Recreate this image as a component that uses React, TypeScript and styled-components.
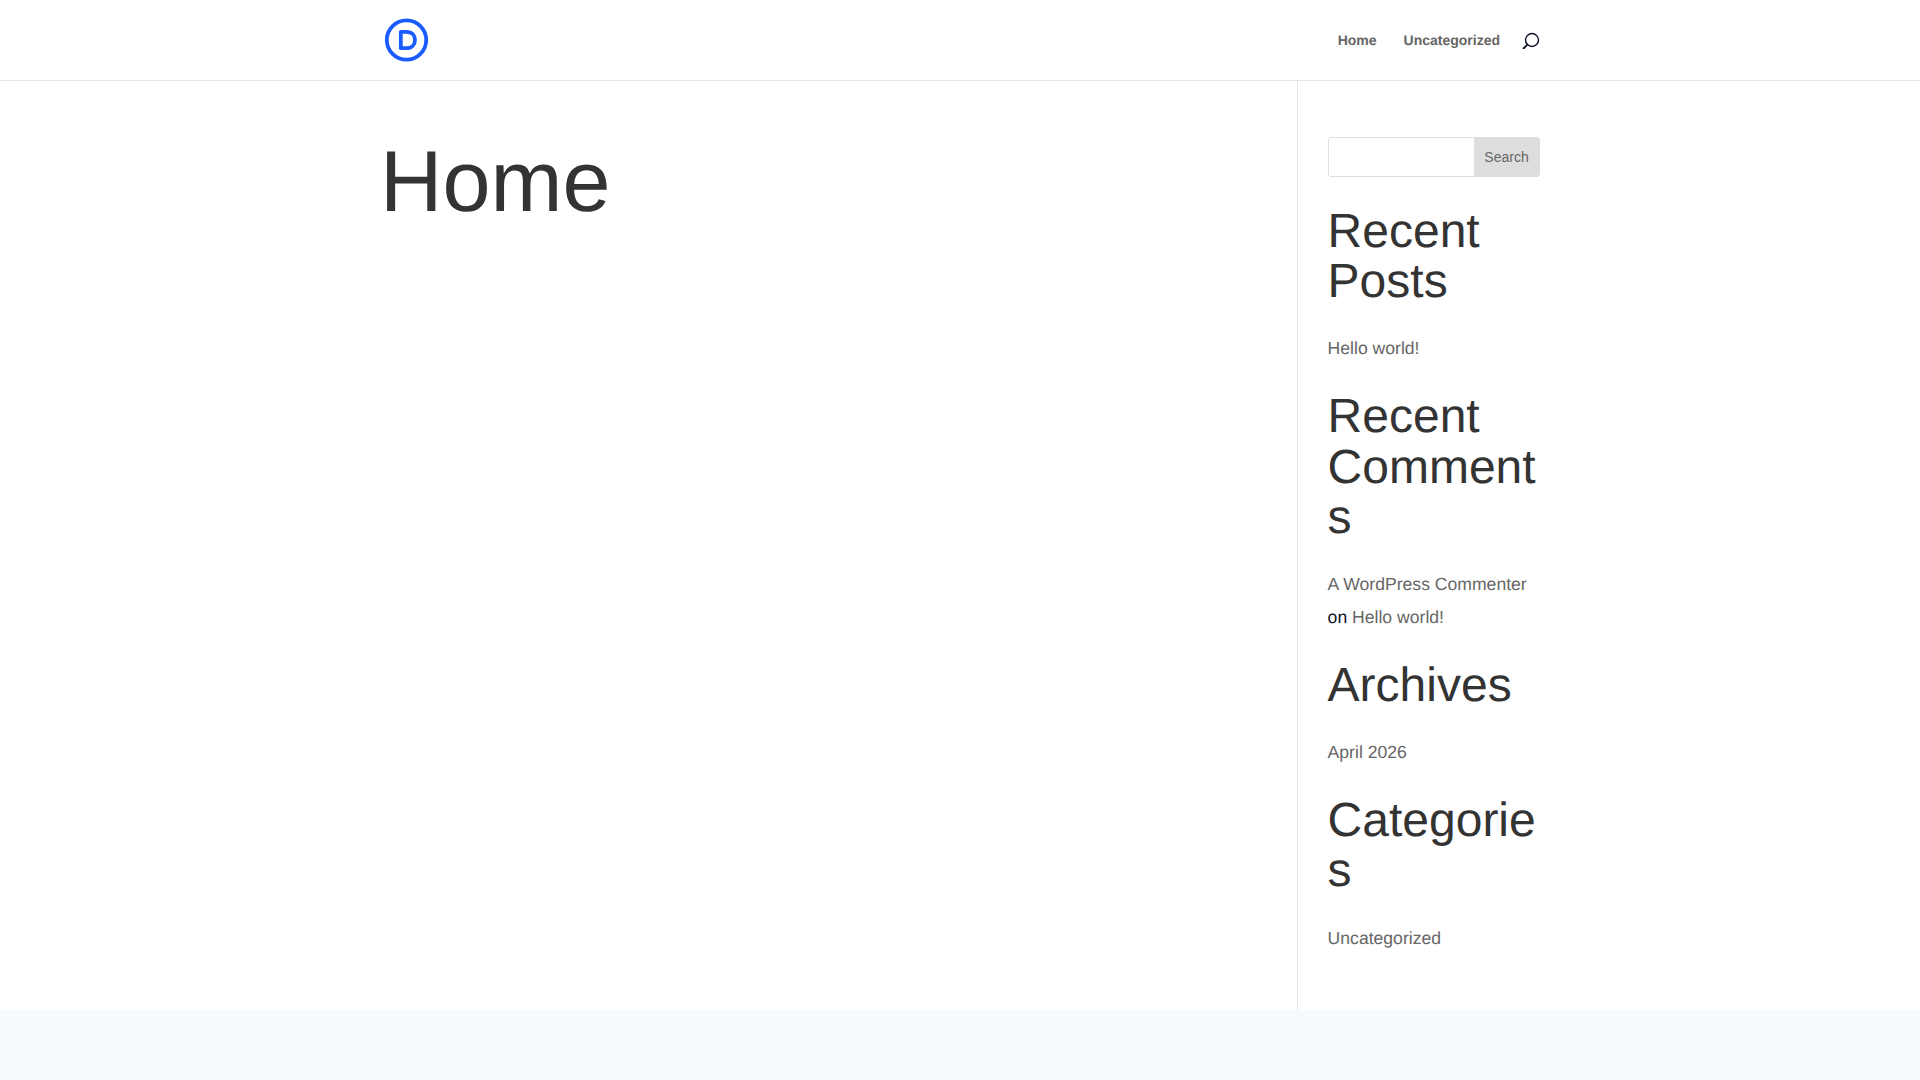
import React from "react";
import styled, { createGlobalStyle } from "styled-components";

const GlobalStyle = createGlobalStyle`
  html, body {
    margin: 0;
    padding: 0;
    background: #f7fafd;
    font-family: "Liberation Sans", Arial, sans-serif;
    text-rendering: geometricPrecision;
  }
  * {
    box-sizing: border-box;
  }
`;

const Page = styled.div`
  min-height: 1080px;
  display: flex;
  flex-direction: column;
  background: #f7fafd;
`;

const Header = styled.header`
  height: 81px;
  background: #fff;
  border-bottom: 1px solid #e6e6e6;
  padding: 0 380px 0 384px;
  display: flex;
  align-items: center;
  justify-content: space-between;
`;

const Logo = styled.svg`
  width: 46px;
  height: 46px;
  display: block;
`;

const Nav = styled.nav`
  display: flex;
  align-items: center;
  gap: 27px;
`;

const NavLink = styled.a`
  font-size: 14px;
  font-weight: 700;
  color: #666;
`;

const SearchIcon = styled.svg`
  width: 18px;
  height: 18px;
  margin-left: -5px;
  display: block;
`;

const Main = styled.main`
  height: 929px;
  background: #fff;
  padding-left: 380px;
  padding-right: 380px;
  display: flex;
`;

const Content = styled.div`
  flex: none;
  width: 918px;
  border-right: 1px solid #e6e6e6;
  padding-top: 56px;
`;

const PageTitle = styled.h1`
  margin: 0;
  font-size: 86.400px;
  font-weight: 400;
  line-height: 90px;
  color: #333;
`;

const Sidebar = styled.aside`
  flex: 1;
  min-width: 0;
  padding: 56px 0 0 29.600px;
`;

const SearchForm = styled.form`
  display: flex;
  height: 40px;
  margin-bottom: 29.500px;
  border: 1px solid #ddd;
  border-radius: 3px;
  overflow: hidden;
`;

const SearchInput = styled.input`
  flex: 1;
  width: 100%;
  min-width: 0;
  border: 0;
  background: #fff;
`;

const SearchButton = styled.button`
  flex: none;
  width: 65px;
  border: 0;
  padding: 0;
  background: #ddd;
  color: #666;
  font: 14px "Liberation Sans", Arial, sans-serif;
`;

const Widget = styled.section`
  margin-bottom: 27.700px;
`;

const WidgetTitle = styled.h2`
  margin: 0 0 24.700px;
  font-size: 48px;
  font-weight: 400;
  line-height: 50.400px;
  color: #333;
  overflow-wrap: anywhere;
`;

const WidgetText = styled.p`
  margin: 0;
  font-size: 17.600px;
  line-height: 32.500px;
  color: #0b1324;
`;

const WidgetLink = styled.a`
  color: #666;
`;

export default function App() {
  return (
    <Page>
      <GlobalStyle />
      <Header>
        <Logo viewBox="0 0 46 46" fill="none">
          <circle cx="22.500" cy="23" r="19.700" stroke="#1a5cff" strokeWidth="3.800" />
          <path
            d="M16.800 14.800h5.500c5.500 0 8.700 3.400 8.700 8.200s-3.200 8.200-8.700 8.200h-5.500z"
            stroke="#1a5cff"
            strokeWidth="3.800"
            strokeLinejoin="round"
          />
        </Logo>
        <Nav>
          <NavLink>Home</NavLink>
          <NavLink>Uncategorized</NavLink>
          <SearchIcon viewBox="0 0 18 18" fill="none">
            <circle cx="10" cy="9" r="6.500" stroke="#0b1324" strokeWidth="1.400" />
            <path d="M5.800 13.200L1 18" stroke="#0b1324" strokeWidth="1.900" />
          </SearchIcon>
        </Nav>
      </Header>
      <Main>
        <Content>
          <PageTitle>Home</PageTitle>
        </Content>
        <Sidebar>
          <SearchForm>
            <SearchInput />
            <SearchButton type="button">Search</SearchButton>
          </SearchForm>
          <Widget>
            <WidgetTitle>Recent Posts</WidgetTitle>
            <WidgetText>
              <WidgetLink>Hello world!</WidgetLink>
            </WidgetText>
          </Widget>
          <Widget>
            <WidgetTitle>Recent Comments</WidgetTitle>
            <WidgetText>
              <WidgetLink>A WordPress Commenter</WidgetLink> on{" "}
              <WidgetLink>Hello world!</WidgetLink>
            </WidgetText>
          </Widget>
          <Widget>
            <WidgetTitle>Archives</WidgetTitle>
            <WidgetText>
              <WidgetLink>April 2026</WidgetLink>
            </WidgetText>
          </Widget>
          <Widget>
            <WidgetTitle>Categories</WidgetTitle>
            <WidgetText>
              <WidgetLink>Uncategorized</WidgetLink>
            </WidgetText>
          </Widget>
        </Sidebar>
      </Main>
    </Page>
  );
}
